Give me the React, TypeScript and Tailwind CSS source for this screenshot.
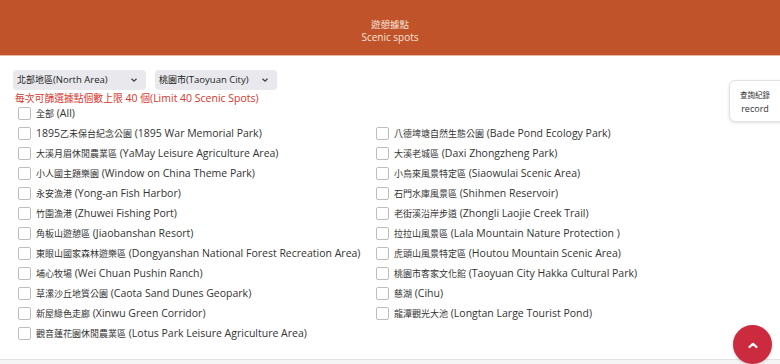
import React from "react";

const left = [
  "1895乙未保台紀念公園 (1895 War Memorial Park)",
  "大溪月眉休閒農業區 (YaMay Leisure Agriculture Area)",
  "小人國主題樂園 (Window on China Theme Park)",
  "永安漁港 (Yong-an Fish Harbor)",
  "竹圍漁港 (Zhuwei Fishing Port)",
  "角板山遊憩區 (Jiaobanshan Resort)",
  "東眼山國家森林遊樂區 (Dongyanshan National Forest Recreation Area)",
  "埔心牧場 (Wei Chuan Pushin Ranch)",
  "草漯沙丘地質公園 (Caota Sand Dunes Geopark)",
  "新屋綠色走廊 (Xinwu Green Corridor)",
  "觀音蓮花園休閒農業區 (Lotus Park Leisure Agriculture Area)",
];
const right = [
  "八德埤塘自然生態公園 (Bade Pond Ecology Park)",
  "大溪老城區 (Daxi Zhongzheng Park)",
  "小烏來風景特定區 (Siaowulai Scenic Area)",
  "石門水庫風景區 (Shihmen Reservoir)",
  "老街溪沿岸步道 (Zhongli Laojie Creek Trail)",
  "拉拉山風景區 (Lala Mountain Nature Protection )",
  "虎頭山風景特定區 (Houtou Mountain Scenic Area)",
  "桃園市客家文化館 (Taoyuan City Hakka Cultural Park)",
  "慈湖 (Cihu)",
  "龍潭觀光大池 (Longtan Large Tourist Pond)",
];

const font = { fontFamily: '"Open Sans", "Noto Sans CJK TC", sans-serif' };

function Mixed({ text, cjk }: { text: string; cjk: string }) {
  const parts = text.split(/([\u3000-\u9fff\uff00-\uffef]+)/);
  return (
    <>
      {parts.map((p, i) =>
        /[\u3000-\u9fff\uff00-\uffef]/.test(p) ? (
          <span key={i} className={cjk}>
            {p}
          </span>
        ) : (
          <span key={i}>{p}</span>
        )
      )}
    </>
  );
}

function Item({ label }: { label: string }) {
  return (
    <div className="flex h-[20px] items-center whitespace-nowrap">
      <span className="mr-[5px] inline-block h-[13px] w-[13px] shrink-0 rounded-[2px] border border-[#bdbdbd] bg-white" />
      <span className="text-[10.5px] leading-none text-[#333]">
        <Mixed text={label} cjk="text-[9px]" />
      </span>
    </div>
  );
}

function Chevron() {
  return (
    <svg width="8" height="6" viewBox="0 0 8 6" className="shrink-0">
      <path d="M1.5 1.8 L4 4.2 L6.5 1.8" fill="none" stroke="#444" strokeWidth="1.3" />
    </svg>
  );
}

export default function App() {
  return (
    <div className="relative h-[364px] w-[780px] overflow-hidden bg-white" style={font}>
      <div className="flex h-[55px] flex-col items-center justify-center bg-[#c1532a] pt-[6px] text-[10px] leading-[13px] text-[#f6e4da]">
        <div className="text-[9.5px]">遊憩據點</div>
        <div>Scenic spots</div>
      </div>
      <div className="h-px bg-[#e7b8a3]" />
      <div className="flex h-[303px] flex-col">
        <div className="ml-[13px] mt-[14px] flex gap-[9px]">
          <div className="flex h-[20px] w-[133px] items-center justify-between whitespace-nowrap rounded-[4px] bg-[#e9e9ed] pl-[4px] pr-[8px] text-[9.5px] text-[#222]">
            <span>
              <Mixed text="北部地區(North Area)" cjk="text-[9px]" />
            </span>
            <Chevron />
          </div>
          <div className="flex h-[20px] w-[122px] items-center justify-between whitespace-nowrap rounded-[4px] bg-[#e9e9ed] pl-[4px] pr-[8px] text-[9.5px] text-[#222]">
            <span>
              <Mixed text="桃園市(Taoyuan City)" cjk="text-[9px]" />
            </span>
            <Chevron />
          </div>
        </div>
        <div className="ml-[15px] mt-[0px] whitespace-nowrap text-[10.5px] leading-[16px] text-[#d8352c]">
          <Mixed text="每次可篩選據點個數上限 40 個(Limit 40 Scenic Spots)" cjk="text-[9.8px]" />
        </div>
        <div className="ml-[18px] mt-[-4px]">
          <Item label="全部 (All)" />
        </div>
        <div className="ml-[18px] grid grid-cols-[358px_1fr]">
          <div className="flex flex-col">
            {left.map((l) => (
              <Item key={l} label={l} />
            ))}
          </div>
          <div className="flex flex-col">
            {right.map((l) => (
              <Item key={l} label={l} />
            ))}
          </div>
        </div>
      </div>
      <div className="h-px bg-[#e2e2e2]" />
      <div className="h-[5px] bg-[#f5f5f5]" />

      <div className="absolute left-[729px] top-[80px] flex h-[42px] w-[60px] flex-col items-center justify-center rounded-[6px] border border-[#e2e2e2] bg-white pr-[8px] pt-[2px] text-[9px] leading-[13px] text-[#333] shadow-[0_1px_3px_rgba(0,0,0,0.12)]">
        <div className="text-[7.5px]">查詢紀錄</div>
        <div>record</div>
      </div>

      <div className="absolute left-[733px] top-[325px] flex h-[39px] w-[39px] items-center justify-center rounded-full bg-[#cc2b3f] shadow-[0_1px_3px_rgba(0,0,0,0.2)]">
        <svg width="12" height="8" viewBox="0 0 12 8">
          <path d="M2.5 6 L6 2.8 L9.5 6" fill="none" stroke="#fff" strokeWidth="2.2" strokeLinecap="round" strokeLinejoin="round" />
        </svg>
      </div>
    </div>
  );
}
